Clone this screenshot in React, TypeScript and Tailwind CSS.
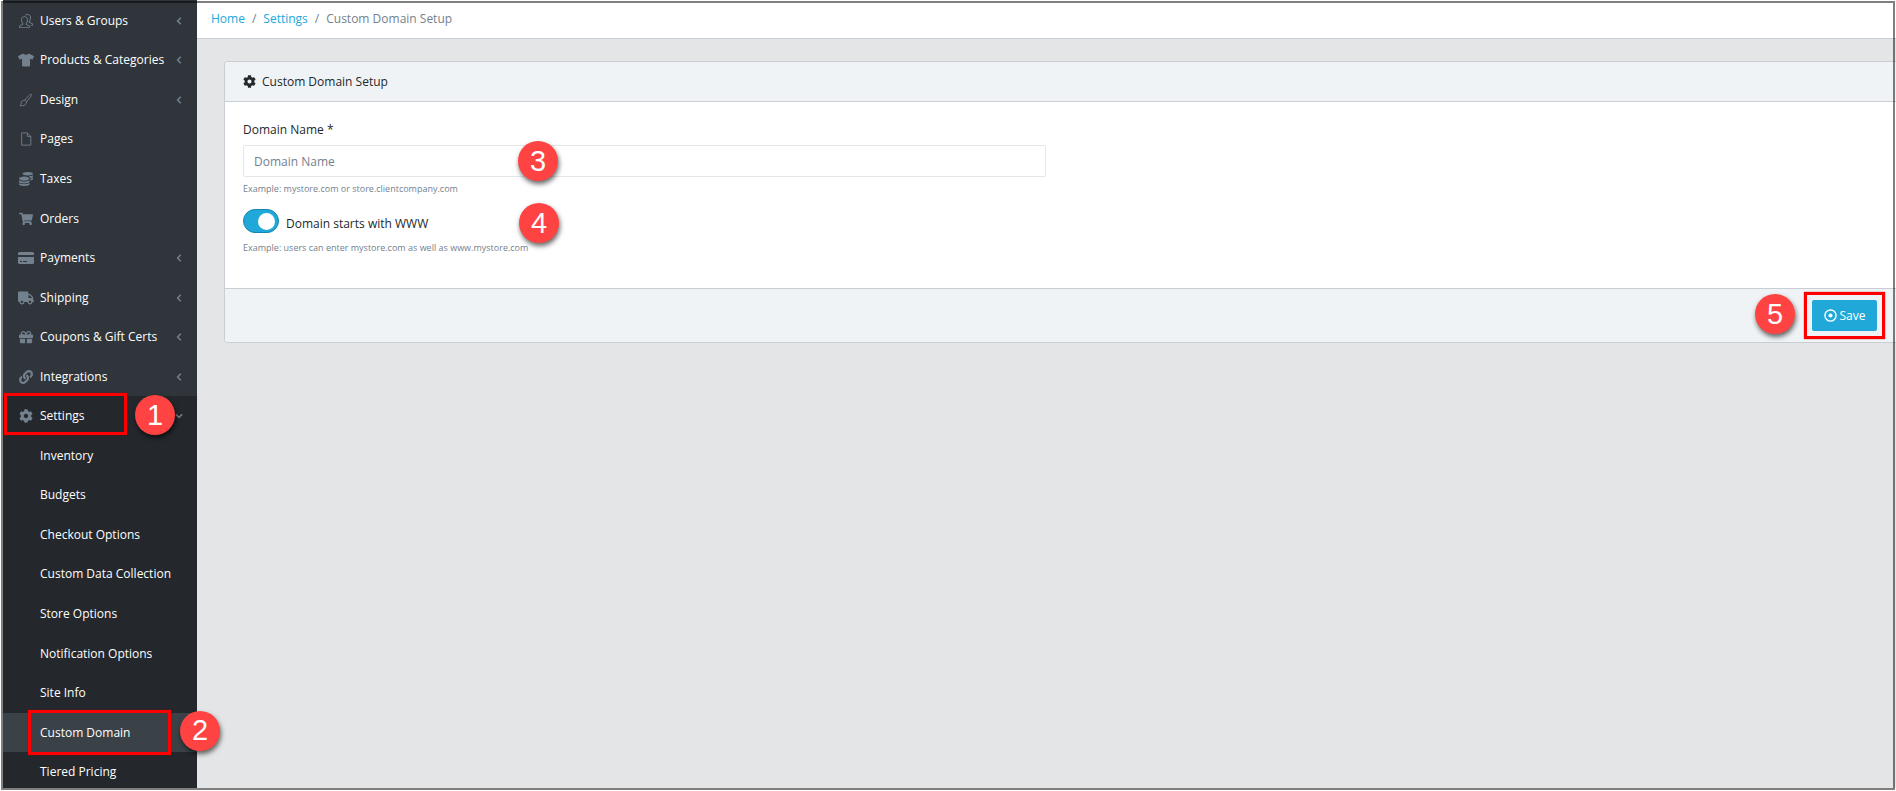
import type { ComponentType } from "react";
import {
  FaCog,
  FaCoins,
  FaGift,
  FaLink,
  FaShoppingCart,
  FaTruck,
  FaTshirt,
} from "react-icons/fa";
import { SlPeople } from "react-icons/sl";

type IconProps = { className?: string };

type NavItem = {
  label: string;
  icon: ComponentType<IconProps>;
  wide?: boolean;
  expandable?: boolean;
};

function BrushIcon({ className }: IconProps) {
  return (
    <svg viewBox="0 0 16 16" fill="none" stroke="currentColor" strokeLinejoin="round" className={className}>
      <path d="M6.2 8.2 12.8 1.5c.8-.8 2.3.5 1.5 1.5L8.5 10.2c-.1-1-1.2-2-2.3-2Z" />
      <path d="M6.2 8.2c-2-.1-3.4 1.200-3.700 3.300-.1 1.100-.6 2.200-1.300 3 2.200.3 4.600.1 6-1.200 1-1 1.400-2 1.300-3.100" />
    </svg>
  );
}

function FileIcon({ className }: IconProps) {
  return (
    <svg viewBox="0 0 16 16" fill="none" stroke="currentColor" strokeLinejoin="round" className={className}>
      <path d="M3 1h6.500l4 4v10H3Z" />
      <path d="M9.500 1v4h4" />
    </svg>
  );
}

function CardIcon({ className }: IconProps) {
  return (
    <svg viewBox="0 0 16 16" fill="currentColor" className={className}>
      <path d="M1.500 2h13A1.500 1.500 0 0 1 16 3.500V5H0V3.500A1.500 1.500 0 0 1 1.500 2Z" />
      <path
        fillRule="evenodd"
        d="M0 7h16v5.500a1.500 1.500 0 0 1-1.500 1.500h-13A1.500 1.500 0 0 1 0 12.500Zm2 4v1h2v-1Zm3 0v1h4v-1Z"
      />
    </svg>
  );
}

function Chevron({ className }: IconProps) {
  return (
    <svg viewBox="0 0 8 8" fill="none" stroke="currentColor" strokeWidth="1.5" className={className}>
      <path d="M5.800.8 2.600 4l3.200 3.200" />
    </svg>
  );
}

const navItems: NavItem[] = [
  { label: "Users & Groups", icon: SlPeople, expandable: true },
  { label: "Products & Categories", icon: FaTshirt, wide: true, expandable: true },
  { label: "Design", icon: BrushIcon, expandable: true },
  { label: "Pages", icon: FileIcon },
  { label: "Taxes", icon: FaCoins },
  { label: "Orders", icon: FaShoppingCart },
  { label: "Payments", icon: CardIcon, wide: true, expandable: true },
  { label: "Shipping", icon: FaTruck, wide: true, expandable: true },
  { label: "Coupons & Gift Certs", icon: FaGift, expandable: true },
  { label: "Integrations", icon: FaLink, expandable: true },
];

const settingsItems = [
  "Inventory",
  "Budgets",
  "Checkout Options",
  "Custom Data Collection",
  "Store Options",
  "Notification Options",
  "Site Info",
  "Custom Domain",
  "Tiered Pricing",
];

// Numbered marker of the walkthrough
function Step({ n, className }: { n: number; className: string }) {
  return (
    <span
      className={`absolute z-20 flex size-10 items-center justify-center rounded-full bg-[#ff4343] font-['Liberation_Sans',sans-serif] text-[29px] leading-none text-white shadow-[1px_3px_5px_rgba(0,0,0,0.6)] ${className}`}
    >
      {n}
    </span>
  );
}

function Highlight({ className }: { className: string }) {
  return (
    <span
      className={`pointer-events-none absolute border-3 border-[#f00] shadow-[0_0_1px_rgba(160,0,0,0.9)] ${className}`}
    />
  );
}

function NavIcon({ icon: Icon, wide }: { icon: ComponentType<IconProps>; wide?: boolean }) {
  return (
    <span className="mr-1.5 flex w-4 shrink-0 justify-center text-[#73818f]">
      <Icon className={wide ? "size-4" : "size-3.5"} />
    </span>
  );
}

function Sidebar() {
  return (
    <aside className="relative z-10 flex w-[194px] shrink-0 flex-col bg-[#2f353a] text-white">
      <nav className="-mb-1 flex grow flex-col pt-px">
        {navItems.map(({ label, icon, wide, expandable }) => (
          <a key={label} href="#" className="flex min-h-9 flex-1 items-center pr-3.5 pl-[15px]">
            <NavIcon icon={icon} wide={wide} />
            <span className="grow whitespace-nowrap">{label}</span>
            {expandable && <Chevron className="size-2 shrink-0 text-[#73818f]" />}
          </a>
        ))}

        <a href="#" className="relative flex min-h-9 flex-1 items-center bg-[#24282c] pr-3.5 pl-[15px]">
          <NavIcon icon={FaCog} />
          <span className="grow">Settings</span>
          <Chevron className="size-2 -rotate-90 text-[#73818f]" />
          <Highlight className="-top-[3px] left-px h-[42px] w-[123px]" />
          <Step n={1} className="-top-px left-[132px]" />
        </a>

        {settingsItems.map((label) =>
          label === "Custom Domain" ? (
            <a
              key={label}
              href="#"
              aria-current="page"
              className="relative flex min-h-9 flex-1 items-center bg-[#3a4248] pl-[37px]"
            >
              {label}
              <Highlight className="-top-[3px] left-[25px] z-10 h-[45px] w-[143px]" />
              <Step n={2} className="-top-0.5 left-[177px]" />
            </a>
          ) : (
            <a key={label} href="#" className="flex min-h-9 flex-1 items-center bg-[#24282c] pl-[37px]">
              {label}
            </a>
          ),
        )}
      </nav>
    </aside>
  );
}

export default function App() {
  return (
    <div className="relative flex min-h-screen bg-white pb-[3px] pl-[3px] font-['Open_Sans','Noto_Sans',sans-serif] text-xs text-[#23282c]">
      <div className="flex min-w-0 grow overflow-hidden">
        <Sidebar />

        <div className="flex min-w-0 grow flex-col bg-[#e4e5e6]">
          {/* Breadcrumb */}
          <nav
            aria-label="Breadcrumb"
            className="flex h-[39px] items-center gap-[7px] border-b border-[#c8ced3] bg-white px-3.5 text-[#73818f]"
          >
            <a href="#" className="text-[#20a8d8]">Home</a>
            <span>/</span>
            <a href="#" className="text-[#20a8d8]">Settings</a>
            <span>/</span>
            <span>Custom Domain Setup</span>
          </nav>

          <main className="pt-[22px] pl-[27px]">
            <form className="rounded-l border border-r-0 border-[#c8ced3] bg-white">
              <header className="flex h-10 items-center gap-1.5 rounded-tl border-b border-[#c8ced3] bg-[#f0f3f5] px-[18px]">
                <FaCog className="size-[13px]" />
                <h1>Custom Domain Setup</h1>
              </header>

              <div className="px-[18px] pt-[18px] pb-8">
                <div className="relative w-1/2 pr-[15px]">
                  <label htmlFor="domain" className="block leading-5">Domain Name *</label>
                  <input
                    id="domain"
                    type="text"
                    placeholder="Domain Name"
                    className="mt-[5px] block h-8 w-full rounded-xs border border-[#e4e7ea] px-2.5 placeholder:text-[#73818f]"
                  />
                  <p className="mt-1 text-[9px] leading-4 text-[#73818f]">
                    Example: mystore.com or store.clientcompany.com
                  </p>
                  <Step n={3} className="top-[21px] left-[275px]" />
                </div>

                <div className="relative mt-3">
                  <label className="flex items-center gap-[7px]">
                    <input type="checkbox" defaultChecked className="peer sr-only" />
                    <span className="flex h-6 w-9 items-center justify-end rounded-full border border-[#1985ac] bg-[#20a8d8] px-[3px]">
                      <span className="size-[17px] rounded-full bg-white" />
                    </span>
                    <span className="pt-1.5">Domain starts with WWW</span>
                  </label>
                  <p className="mt-[7px] text-[9px] leading-4 text-[#73818f]">
                    Example: users can enter mystore.com as well as www.mystore.com
                  </p>
                  <Step n={4} className="-top-1.5 left-[276px]" />
                </div>
              </div>

              <footer className="flex h-[54px] items-center justify-end rounded-bl border-t border-[#c8ced3] bg-[#f0f3f5] pr-[19px]">
                <div className="relative">
                  <button
                    type="submit"
                    className="flex h-[31px] w-[65px] items-center justify-center gap-[3px] rounded-xs bg-[#20a8d8] text-white"
                  >
                    <svg viewBox="0 0 14 14" className="size-[13px]">
                      <circle cx="7" cy="7" r="6" fill="none" stroke="currentColor" strokeWidth="1.5" />
                      <circle cx="7" cy="7" r="2.200" fill="currentColor" />
                    </svg>
                    Save
                  </button>
                  <Highlight className="-inset-2" />
                  <Step n={5} className="-top-1.5 -left-[57px]" />
                </div>
              </footer>
            </form>
          </main>
        </div>
      </div>

      {/* Outline around the whole page */}
      <div className="pointer-events-none absolute inset-px z-30 border-2 border-black/50" />
    </div>
  );
}
